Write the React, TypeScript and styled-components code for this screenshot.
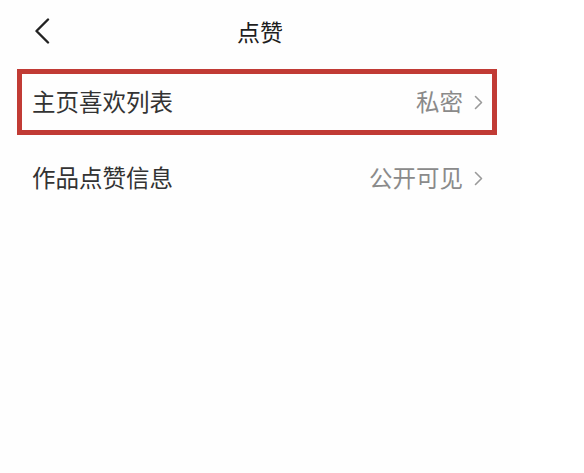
import React from 'react';
import styled, { createGlobalStyle } from 'styled-components';

const GlobalStyle = createGlobalStyle`
  html, body {
    margin: 0;
    padding: 0;
    background: #ffffff;
  }
  body {
    font-family: "Noto Sans CJK SC", "Noto Sans", sans-serif;
  }
`;

const Screen = styled.div`
  width: 520px;
  min-height: 473px;
  background: #fefefe;
  display: flex;
  flex-direction: column;
`;

const Header = styled.div`
  height: 64px;
  display: flex;
  align-items: center;
  justify-content: center;
  position: relative;
`;

const BackButton = styled.button`
  position: absolute;
  left: 33px;
  top: 17px;
  width: 18px;
  height: 28px;
  padding: 0;
  border: none;
  background: none;
  display: flex;
  align-items: center;
  justify-content: center;
  cursor: pointer;
`;

const Title = styled.h1`
  margin: 0;
  font-size: 23px;
  font-weight: 400;
  color: #1e1e1e;
  line-height: 1;
  padding-bottom: 2px;
`;

const List = styled.div`
  display: flex;
  flex-direction: column;
`;

const Row = styled.div<{ highlighted?: boolean }>`
  position: relative;
  height: 76px;
  display: flex;
  align-items: center;
  justify-content: space-between;
  padding: 0 35px 0 32px;

  &::after {
    content: '';
    display: ${props => (props.highlighted ? 'block' : 'none')};
    position: absolute;
    top: 5px;
    bottom: 5px;
    left: 17px;
    right: 23px;
    border: 5px solid #c13b35;
    pointer-events: none;
  }
`;

const Label = styled.span`
  font-size: 23.5px;
  color: #333;
  line-height: 1;
`;

const Value = styled.span`
  display: flex;
  align-items: center;
  gap: 9px;
  font-size: 23.5px;
  color: #8a8a8a;
  line-height: 1;
`;

const BackIcon = () => (
  <svg width="16" height="26" viewBox="0 0 16 26">
    <path d="M14 1.5 L2.5 13 L14 24.5" fill="none" stroke="#222" strokeWidth="2.4" strokeLinecap="round" strokeLinejoin="round" />
  </svg>
);

const Chevron = () => (
  <svg width="13" height="15" viewBox="0 0 13 15">
    <path d="M3.5 1.5 L9.5 7.5 L3.5 13.5" fill="none" stroke="#9a9a9a" strokeWidth="1.6" strokeLinecap="round" strokeLinejoin="round" />
  </svg>
);

const rows = [
  { label: '主页喜欢列表', value: '私密', highlighted: true },
  { label: '作品点赞信息', value: '公开可见', highlighted: false },
];

const App: React.FC = () => {
  return (
    <>
      <GlobalStyle />
      <Screen>
        <Header>
          <BackButton aria-label="返回">
            <BackIcon />
          </BackButton>
          <Title>点赞</Title>
        </Header>
        <List>
          {rows.map(row => (
            <Row key={row.label} highlighted={row.highlighted}>
              <Label>{row.label}</Label>
              <Value>
                {row.value}
                <Chevron />
              </Value>
            </Row>
          ))}
        </List>
      </Screen>
    </>
  );
};

export default App;
